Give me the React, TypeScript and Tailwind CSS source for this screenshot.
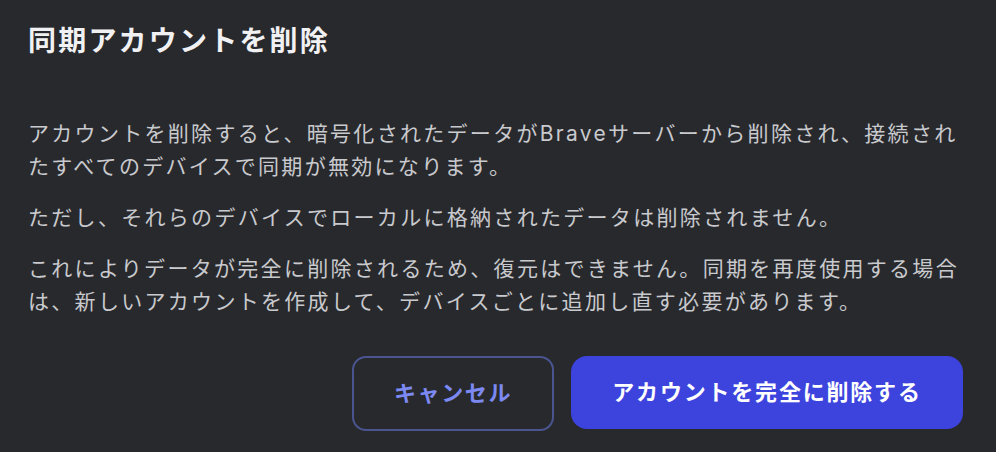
import React from "react";

export default function App() {
  const font = { fontFamily: '"Inter", "Noto Sans CJK JP", sans-serif' };
  return (
    <div
      className="w-[996px] h-[452px] bg-[#28292d] overflow-hidden"
      style={font}
    >
      <div className="pl-[28px] pr-[26px] pt-[23px]">
        <h1 className="text-[28px] leading-[36px] font-bold tracking-[2.2px] text-[#f1f1f3]">
          同期アカウントを削除
        </h1>
        <div className="mt-[58px] text-[21px] leading-[33px] tracking-[2.3px] text-[#c9cacd] flex flex-col gap-[18px]">
          <p>
            アカウントを削除すると、暗号化されたデータがBraveサーバーから削除され、接続されたすべてのデバイスで同期が無効になります。
          </p>
          <p>ただし、それらのデバイスでローカルに格納されたデータは削除されません。</p>
          <p>
            これによりデータが完全に削除されるため、復元はできません。同期を再度使用する場合は、新しいアカウントを作成して、デバイスごとに追加し直す必要があります。
          </p>
        </div>
      </div>
      <div className="flex justify-end gap-[17px] pr-[33px] mt-[38px]">
        <button className="w-[202px] h-[75px] rounded-[14px] border-2 border-[#4a5590] text-[#7d89f2] text-[22px] font-bold tracking-[1.6px]">
          キャンセル
        </button>
        <button className="w-[392px] h-[73px] rounded-[16px] bg-[#3d43dd] text-white text-[22px] font-bold tracking-[1.8px]">
          アカウントを完全に削除する
        </button>
      </div>
    </div>
  );
}
